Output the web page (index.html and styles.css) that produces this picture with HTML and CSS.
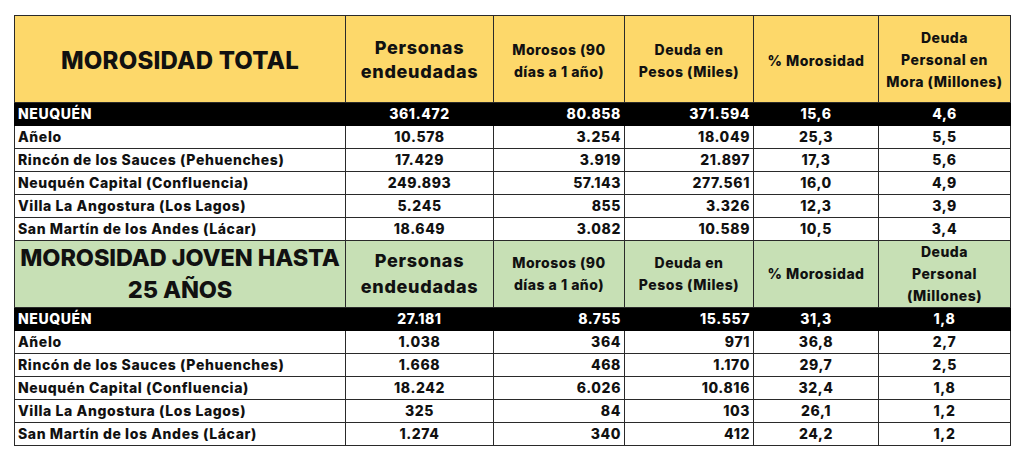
FILE: index.html
```html
<!DOCTYPE html>
<html lang="es">
<head>
<meta charset="utf-8">
<title>Morosidad</title>
<link rel="stylesheet" href="styles.css">
</head>
<body>
<table class="grid">
  <colgroup>
    <col class="c1"><col class="c2"><col class="c3"><col class="c4"><col class="c5"><col class="c6">
  </colgroup>
  <tr class="head yellow">
    <th class="title">MOROSIDAD TOTAL</th>
    <th class="big">Personas<br>endeudadas</th>
    <th>Morosos (90<br>días a 1 año)</th>
    <th>Deuda en<br>Pesos (Miles)</th>
    <th>% Morosidad</th>
    <th class="tall">Deuda<br>Personal en<br>Mora (Millones)</th>
  </tr>
  <tr class="total">
    <td class="name">NEUQUÉN</td><td class="ctr">361.472</td><td class="rgt">80.858</td><td class="rgt">371.594</td><td class="ctr">15,6</td><td class="ctr">4,6</td>
  </tr>
  <tr class="row">
    <td class="name">Añelo</td><td class="ctr">10.578</td><td class="rgt">3.254</td><td class="rgt">18.049</td><td class="ctr">25,3</td><td class="ctr">5,5</td>
  </tr>
  <tr class="row">
    <td class="name">Rincón de los Sauces (Pehuenches)</td><td class="ctr">17.429</td><td class="rgt">3.919</td><td class="rgt">21.897</td><td class="ctr">17,3</td><td class="ctr">5,6</td>
  </tr>
  <tr class="row">
    <td class="name">Neuquén Capital (Confluencia)</td><td class="ctr">249.893</td><td class="rgt">57.143</td><td class="rgt">277.561</td><td class="ctr">16,0</td><td class="ctr">4,9</td>
  </tr>
  <tr class="row">
    <td class="name">Villa La Angostura (Los Lagos)</td><td class="ctr">5.245</td><td class="rgt">855</td><td class="rgt">3.326</td><td class="ctr">12,3</td><td class="ctr">3,9</td>
  </tr>
  <tr class="row">
    <td class="name">San Martín de los Andes (Lácar)</td><td class="ctr">18.649</td><td class="rgt">3.082</td><td class="rgt">10.589</td><td class="ctr">10,5</td><td class="ctr">3,4</td>
  </tr>
  <tr class="head green">
    <th class="title two">MOROSIDAD JOVEN HASTA<br>25 AÑOS</th>
    <th class="big">Personas<br>endeudadas</th>
    <th>Morosos (90<br>días a 1 año)</th>
    <th>Deuda en<br>Pesos (Miles)</th>
    <th>% Morosidad</th>
    <th class="tall">Deuda<br>Personal<br>(Millones)</th>
  </tr>
  <tr class="total">
    <td class="name">NEUQUÉN</td><td class="ctr">27.181</td><td class="rgt">8.755</td><td class="rgt">15.557</td><td class="ctr">31,3</td><td class="ctr">1,8</td>
  </tr>
  <tr class="row">
    <td class="name">Añelo</td><td class="ctr">1.038</td><td class="rgt">364</td><td class="rgt">971</td><td class="ctr">36,8</td><td class="ctr">2,7</td>
  </tr>
  <tr class="row">
    <td class="name">Rincón de los Sauces (Pehuenches)</td><td class="ctr">1.668</td><td class="rgt">468</td><td class="rgt">1.170</td><td class="ctr">29,7</td><td class="ctr">2,5</td>
  </tr>
  <tr class="row">
    <td class="name">Neuquén Capital (Confluencia)</td><td class="ctr">18.242</td><td class="rgt">6.026</td><td class="rgt">10.816</td><td class="ctr">32,4</td><td class="ctr">1,8</td>
  </tr>
  <tr class="row">
    <td class="name">Villa La Angostura (Los Lagos)</td><td class="ctr">325</td><td class="rgt">84</td><td class="rgt">103</td><td class="ctr">26,1</td><td class="ctr">1,2</td>
  </tr>
  <tr class="row">
    <td class="name">San Martín de los Andes (Lácar)</td><td class="ctr">1.274</td><td class="rgt">340</td><td class="rgt">412</td><td class="ctr">24,2</td><td class="ctr">1,2</td>
  </tr>
</table>
</body>
</html>
```

FILE: styles.css
```css
html, body {
  margin: 0;
  background: #ffffff;
}
body {
  padding: 15px 0 0 14px;
  font-family: "Inter", "Liberation Sans", sans-serif;
  font-weight: 800;
  color: #111;
}
.grid {
  border-collapse: collapse;
  table-layout: fixed;
  width: 996px;
}
.c1 { width: 331px; }
.c2 { width: 148px; }
.c3 { width: 131px; }
.c4 { width: 129px; }
.c5 { width: 125px; }
.c6 { width: 132px; }

.grid th, .grid td {
  border: 1px solid #2a2a2a;
  padding: 0 3px;
  overflow: hidden;
  white-space: nowrap;
}
.head th {
  font-size: 14px;
  line-height: 22px;
  letter-spacing: 0.5px;
  text-align: center;
  font-weight: 800;
  padding-top: 3px;
}
.yellow { height: 87px; }
.yellow th { background: #fdd86a; }
.green { height: 66px; }
.green th { background: #c7e0b5; padding-top: 0; }
.head .title {
  font-size: 24px;
  line-height: 32px;
  letter-spacing: 0.2px;
  padding-top: 4px;
}
.green .title {
  font-size: 23.5px;
  letter-spacing: -0.1px;
  padding-top: 0;
}
.head .big {
  font-size: 18px;
  line-height: 24px;
  letter-spacing: 0.7px;
  padding-top: 1px;
}
.green .big { line-height: 26px; padding-top: 0; }
.head .tall { line-height: 22px; padding-top: 1px; }
.green .tall { padding-top: 0; }

.total, .row { height: 23px; }
.total td {
  background: #000;
  color: #fff;
  border-color: #000;
}
.grid td {
  font-size: 14px;
  line-height: 20px;
  letter-spacing: 0.6px;
}
.name { text-align: left; }
.ctr { text-align: center; }
.rgt { text-align: right; }
```
